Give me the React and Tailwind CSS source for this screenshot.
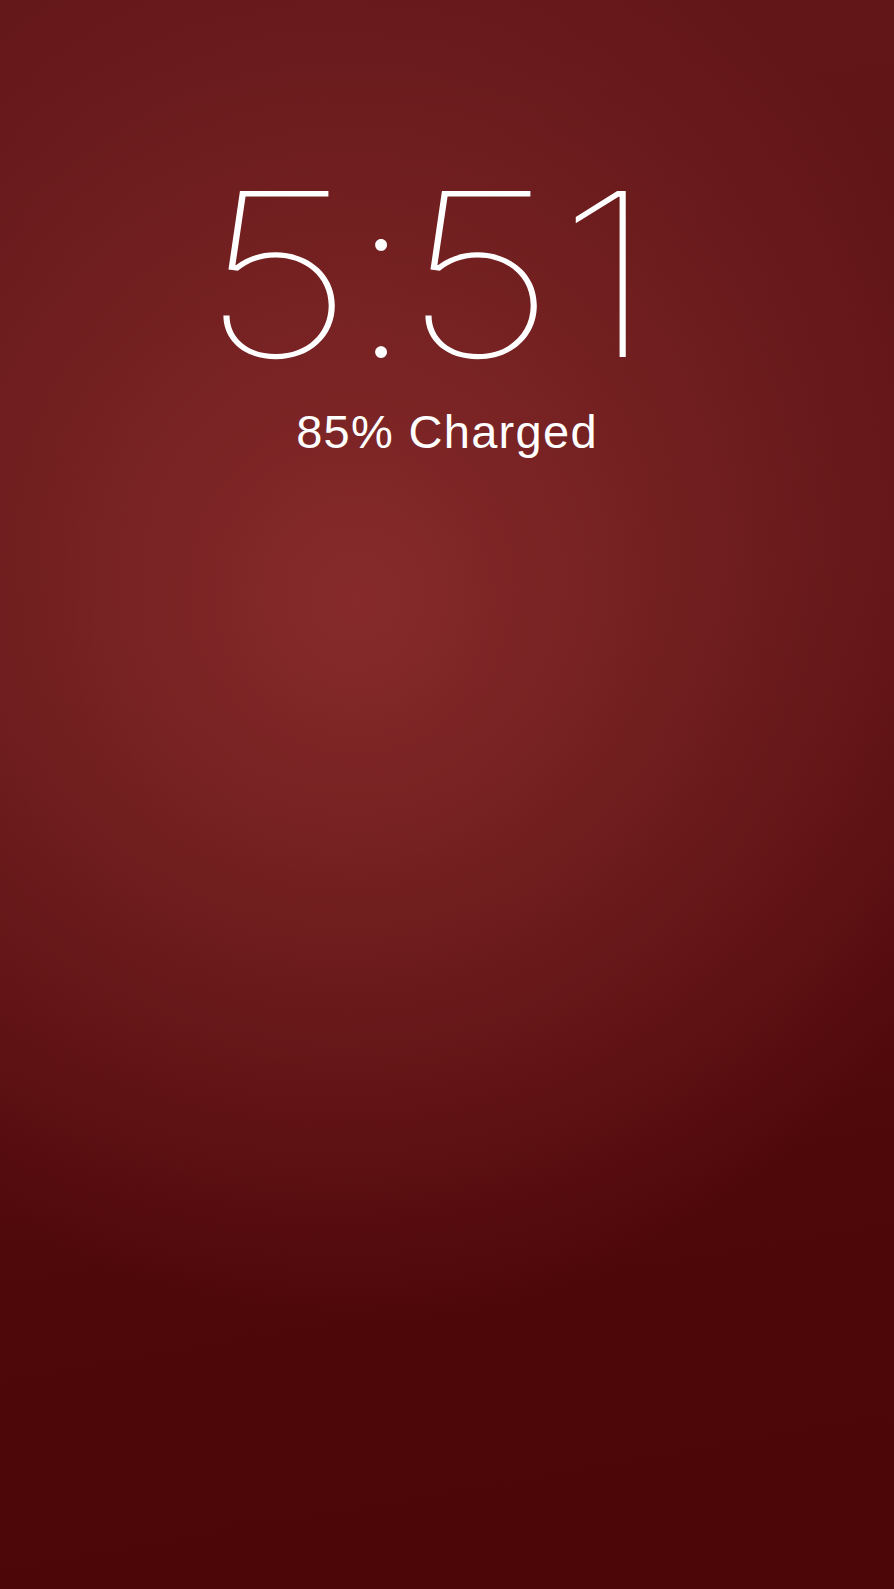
export default function App() {
  return (
    <div className="w-[894px] h-[1589px] overflow-hidden text-white bg-[radial-gradient(ellipse_680px_720px_at_355px_600px,rgba(140,46,46,0.88)_0%,rgba(140,46,46,0)_100%),linear-gradient(170deg,#631719_0%,#5c1214_40%,#4f080a_75%,#4d0608_100%)]">
      <div className="pt-[160px] pl-[220px] flex font-['Inter',sans-serif] font-thin text-[228px] leading-[1]">
        <span className="inline-flex justify-center w-[115px] scale-x-[1.2]">5</span>
        <span className="inline-flex justify-center w-[92px]">:</span>
        <span className="inline-flex justify-center w-[105px] scale-x-[1.2]">5</span>
        <span className="inline-flex justify-center w-[139px] ml-[5px] scale-x-[1.2]">1</span>
      </div>
      <div className="mt-[20px] text-center font-['Liberation_Sans',sans-serif] text-[47px] leading-[1] tracking-[1.3px]">
        85% Charged
      </div>
    </div>
  );
}
